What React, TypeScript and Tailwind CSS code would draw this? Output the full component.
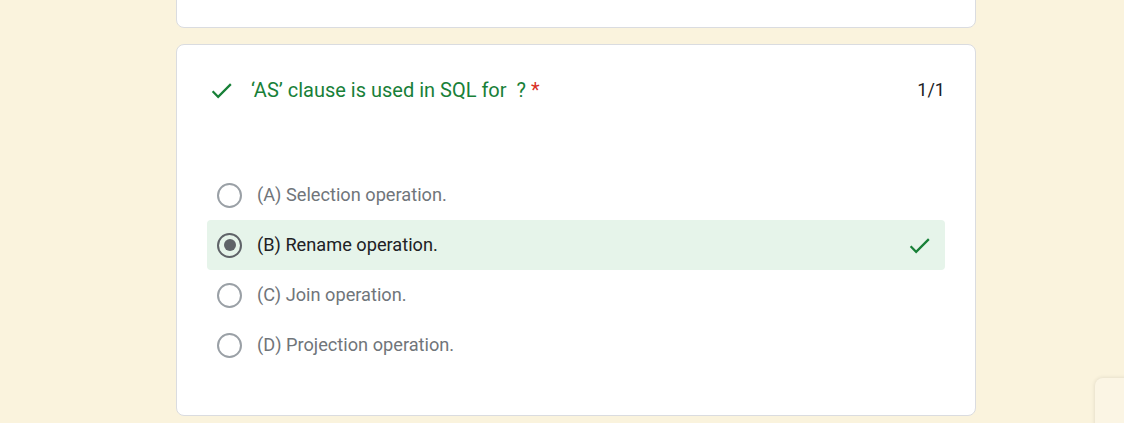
import React from "react";

const Check = ({ className }: { className?: string }) => (
  <svg viewBox="0 0 24 24" width="27" height="27" className={className} fill="currentColor">
    <path d="M9 16.17L4.83 12l-1.42 1.41L9 19 21 7l-1.41-1.41z" />
  </svg>
);

const options = [
  { label: "(A) Selection operation.", selected: false },
  { label: "(B) Rename operation.", selected: true },
  { label: "(C) Join operation.", selected: false },
  { label: "(D) Projection operation.", selected: false },
];

export default function App() {
  return (
    <div
      className="relative w-[1124px] h-[423px] overflow-hidden bg-[#faf3dd]"
      style={{ fontFamily: "Roboto, 'Liberation Sans', sans-serif" }}
    >
      <div className="ml-[176px] w-[800px]">
        <div className="-mt-[72px] h-[100px] bg-white border border-[#dadce0] rounded-lg" />
        <div className="mt-[16px] bg-white border border-[#dadce0] rounded-lg px-[30px] pt-[33px] pb-[45px]">
          <div className="flex items-center h-[24px]">
            <Check className="ml-[1px] text-[#188038]" />
            <div className="ml-[16px] text-[20px] text-[#188038] leading-[24px]">
              ‘AS’ clause is used in SQL for&nbsp; ? <span className="text-[#d93025]">*</span>
            </div>
            <div className="ml-auto text-[18px] text-[#202124] leading-[24px]">1/1</div>
          </div>
          <div className="mt-[68px] flex flex-col">
            {options.map((o) => (
              <div
                key={o.label}
                className={
                  "flex items-center h-[50px] pl-[12px] pr-[12px] rounded " +
                  (o.selected ? "bg-[#e6f4ea]" : "")
                }
              >
                <div
                  className={
                    "w-[25px] h-[25px] rounded-full border-2 flex items-center justify-center shrink-0 -ml-[2px] " +
                    (o.selected ? "border-[#5f6368]" : "border-[#9aa0a6]")
                  }
                >
                  {o.selected && <div className="w-[12px] h-[12px] rounded-full bg-[#5f6368]" />}
                </div>
                <div
                  className={
                    "ml-[15px] text-[18.2px] leading-[24px] " +
                    (o.selected ? "text-[#202124]" : "text-[#70757a]")
                  }
                >
                  {o.label}
                </div>
                {o.selected && <Check className="ml-auto text-[#188038]" />}
              </div>
            ))}
          </div>
        </div>
      </div>
      <div className="absolute left-[1095px] top-[378px] w-[80px] h-[80px] rounded-lg bg-[#fbf5e4] shadow-[0_0_4px_rgba(0,0,0,0.12)]" />
    </div>
  );
}
